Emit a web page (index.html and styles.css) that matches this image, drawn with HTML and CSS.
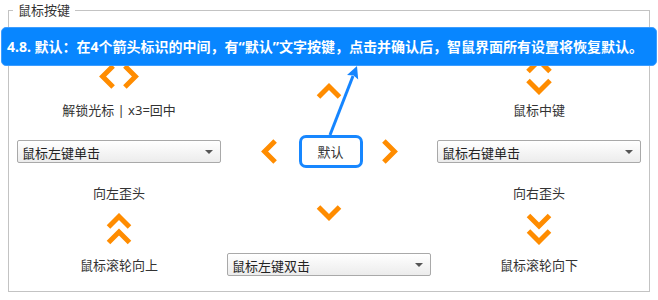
FILE: index.html
```html
<!DOCTYPE html>
<html>

<head>
    <meta charset="utf-8" />
    <title>鼠标按键</title>
    <meta name="viewport" content="width=device-width, initial-scale=1">
    <link rel="stylesheet" href="styles.css">
</head>

<body>
    <fieldset class="keys">
        <legend>鼠标按键</legend>
        <div class="columns">
            <div class="col">
                <div class="icon-slot">
                    <svg class="chev" width="40" height="25" viewBox="0 0 40 25">
                        <polyline points="14.1,2 3.6,12.5 14.1,23" />
                        <polyline points="25.9,2 36.4,12.5 25.9,23" />
                    </svg>
                </div>
                <div class="label">解锁光标 | x3=回中</div>
                <div class="select gap-21">
                    <select>
                        <option>鼠标左键单击</option>
                    </select>
                </div>
                <div class="label gap-21">向左歪头</div>
                <div class="wheel">
                    <svg class="chev" width="26" height="32" viewBox="0 0 26 32">
                        <polyline points="2.5,14 13,3.5 23.5,14" />
                        <polyline points="2.5,29.5 13,19 23.5,29.5" />
                    </svg>
                </div>
                <div class="label gap-11">鼠标滚轮向上</div>
            </div>

            <div class="col">
                <div class="up">
                    <svg class="chev" width="26" height="17" viewBox="0 0 26 17">
                        <polyline points="2.5,14.1 13,3.6 23.5,14.1" />
                    </svg>
                </div>
                <div class="default-row">
                    <svg class="chev" width="17" height="25" viewBox="0 0 17 25">
                        <polyline points="14.1,2 3.6,12.5 14.1,23" />
                    </svg>
                    <button class="reset">默认</button>
                    <svg class="chev" width="17" height="25" viewBox="0 0 17 25">
                        <polyline points="2.9,2 13.4,12.5 2.9,23" />
                    </svg>
                </div>
                <div class="down">
                    <svg class="chev" width="26" height="17" viewBox="0 0 26 17">
                        <polyline points="2.5,2.9 13,13.4 23.5,2.9" />
                    </svg>
                </div>
                <div class="select gap-32">
                    <select>
                        <option>鼠标左键双击</option>
                    </select>
                </div>
            </div>

            <div class="col">
                <div class="icon-slot">
                    <svg class="chev" width="28" height="38" viewBox="0 0 28 38">
                        <polyline points="3,14.6 14,3.6 25,14.6" />
                        <polyline points="3,23.5 14,34.5 25,23.5" />
                    </svg>
                </div>
                <div class="label">鼠标中键</div>
                <div class="select gap-21">
                    <select>
                        <option>鼠标右键单击</option>
                    </select>
                </div>
                <div class="label gap-21">向右歪头</div>
                <div class="wheel">
                    <svg class="chev" width="26" height="32" viewBox="0 0 26 32">
                        <polyline points="2.5,2.5 13,13 23.5,2.5" />
                        <polyline points="2.5,18 13,28.5 23.5,18" />
                    </svg>
                </div>
                <div class="label gap-11">鼠标滚轮向下</div>
            </div>
        </div>
    </fieldset>

    <div class="tip">4.8. 默认：在4个箭头标识的中间，有“默认”文字按键，点击并确认后，智鼠界面所有设置将恢复默认。</div>

    <svg class="pointer" width="658" height="300" viewBox="0 0 658 300">
        <line x1="330" y1="135" x2="353" y2="76" />
        <polygon points="357,66 358.2,79.4 353.6,75.5 347,75" />
    </svg>
</body>

</html>
```

FILE: styles.css
```css
body {
    margin: 0;
    padding: 0;
    width: 100%;
    font-family: "Noto Sans", "Noto Sans CJK SC", sans-serif;
    color: #333;
}

button:focus,
select:focus {
    outline: none;
}

.keys {
    margin: 1px 8px 0;
    padding: 0;
    border: 1px solid #c3c3c3;
    min-width: 0;
}

.keys legend {
    margin-left: 4px;
    padding: 0 5px;
    font-size: 13px;
    line-height: 18px;
    color: #333;
}

.columns {
    display: grid;
    grid-template-columns: repeat(3, 204px);
    column-gap: 6px;
    padding: 0 8px;
    height: 272px;
}

.col {
    display: flex;
    flex-direction: column;
    align-items: center;
}

.chev polyline {
    fill: none;
    stroke: #ff8c00;
    stroke-width: 5;
    stroke-linejoin: miter;
}

.chev {
    display: block;
}

.icon-slot {
    height: 50px;
    margin-top: 32px;
    display: flex;
    align-items: center;
    justify-content: center;
}

.label {
    height: 18px;
    line-height: 18px;
    font-size: 13px;
    color: #333;
    white-space: nowrap;
}

.gap-21 {
    margin-top: 21px;
}

.gap-11 {
    margin-top: 11px;
}

.gap-32 {
    margin-top: 32px;
}

.wheel {
    margin-top: 11px;
    height: 32px;
}

.up {
    margin-top: 64px;
    height: 17px;
}

.default-row {
    margin-top: 35px;
    height: 33px;
    display: flex;
    align-items: center;
}

.reset {
    width: 64px;
    height: 33px;
    margin: 0 18px 0 21px;
    border: 3px solid #1787ff;
    border-radius: 7px;
    background-color: white;
    font-family: inherit;
    font-size: 13px;
    color: #333;
    padding: 0;
}

.down {
    margin-top: 36px;
    height: 17px;
}

.select {
    position: relative;
    align-self: stretch;
    height: 23px;
    box-sizing: border-box;
    border: 1px solid #a9a9a9;
    border-radius: 2px;
    background: linear-gradient(#ffffff, #ececec);
}

.select select {
    appearance: none;
    -webkit-appearance: none;
    width: 100%;
    height: 100%;
    border: none;
    background: transparent;
    padding: 0 0 0 4px;
    font-family: inherit;
    font-size: 13px;
    color: #222;
}

.select::after {
    content: "";
    position: absolute;
    right: 7px;
    top: 9px;
    border-left: 4px solid transparent;
    border-right: 4px solid transparent;
    border-top: 4px solid #555;
}

.tip {
    position: absolute;
    left: 1px;
    top: 27px;
    width: 656px;
    height: 39px;
    box-sizing: border-box;
    padding-left: 5px;
    border: 1px solid #3d9dff;
    border-radius: 5px;
    background-color: #0886ff;
    color: white;
    font-size: 14px;
    font-weight: bold;
    line-height: 37px;
    white-space: nowrap;
}

.pointer {
    position: absolute;
    left: 0;
    top: 0;
    pointer-events: none;
}

.pointer line {
    stroke: #1585ff;
    stroke-width: 3;
}

.pointer polygon {
    fill: #1585ff;
}
```
